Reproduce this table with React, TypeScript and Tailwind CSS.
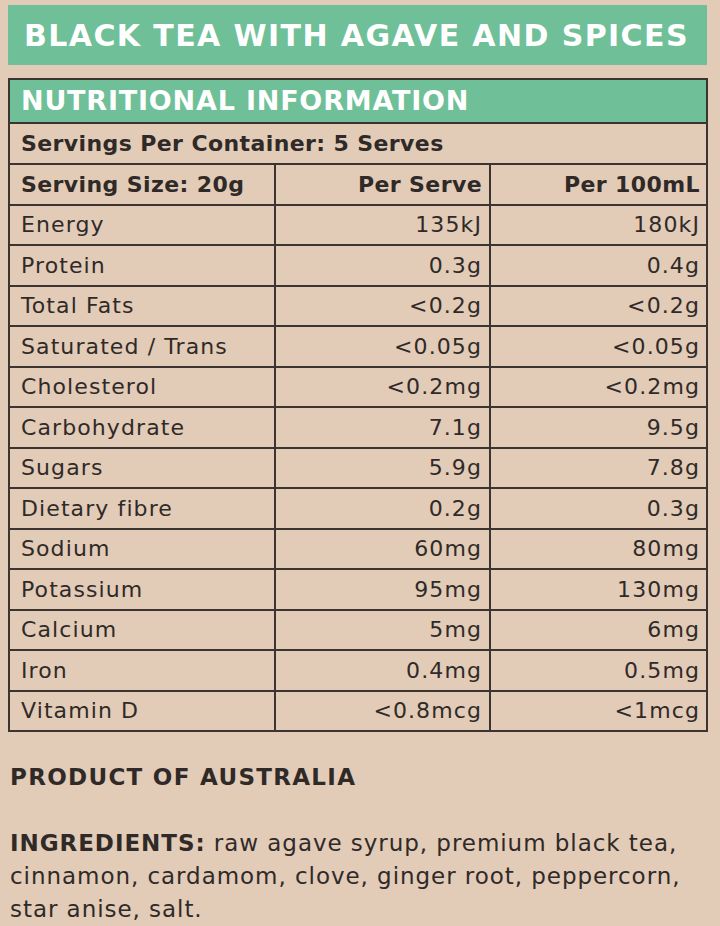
const rows = [
  ["Energy", "135kJ", "180kJ"],
  ["Protein", "0.3g", "0.4g"],
  ["Total Fats", "<0.2g", "<0.2g"],
  ["Saturated / Trans", "<0.05g", "<0.05g"],
  ["Cholesterol", "<0.2mg", "<0.2mg"],
  ["Carbohydrate", "7.1g", "9.5g"],
  ["Sugars", "5.9g", "7.8g"],
  ["Dietary fibre", "0.2g", "0.3g"],
  ["Sodium", "60mg", "80mg"],
  ["Potassium", "95mg", "130mg"],
  ["Calcium", "5mg", "6mg"],
  ["Iron", "0.4mg", "0.5mg"],
  ["Vitamin D", "<0.8mcg", "<1mcg"],
];

function Row({ a, b, c, bold }: { a: string; b: string; c: string; bold?: boolean }) {
  return (
    <div className={`grid grid-cols-[266px_215px_1fr] h-[40.5px] border-t-2 border-[#3b3431] ${bold ? "font-bold tracking-[0.4px]" : "tracking-[1.1px]"}`}>
      <div className="flex items-center pl-[11px] border-r-2 border-[#3b3431]">{a}</div>
      <div className="flex items-center justify-end pr-[7px] border-r-2 border-[#3b3431]">{b}</div>
      <div className="flex items-center justify-end pr-[6px]">{c}</div>
    </div>
  );
}

export default function App() {
  return (
    <div className="w-[720px] h-[926px] overflow-hidden bg-[#e2cbb7] text-[#2f2a28] px-[8px] pt-[5px]" style={{ fontFamily: '"DejaVu Sans", sans-serif' }}>
      <div className="h-[60px] w-[699px] bg-[#6fbf98] flex items-center pl-[16px] text-white font-bold text-[30px] tracking-[1.4px]">
        BLACK TEA WITH AGAVE AND SPICES
      </div>

      <div className="mt-[13px] w-[700px] border-2 border-[#3b3431] text-[22px]">
        <div className="h-[42px] bg-[#6fbf98] flex items-center pl-[11px] text-white font-semibold text-[27px] tracking-[0.8px]">
          NUTRITIONAL INFORMATION
        </div>
        <div className="h-[41px] border-t-2 border-[#3b3431] flex items-center pl-[11px] font-bold tracking-[0.4px]">
          Servings Per Container: 5 Serves
        </div>
        <Row a="Serving Size: 20g" b="Per Serve" c="Per 100mL" bold />
        {rows.map((r) => (
          <Row key={r[0]} a={r[0]} b={r[1]} c={r[2]} />
        ))}
      </div>

      <div className="mt-[28px] pl-[2px] font-bold text-[23px] tracking-[1.3px]">PRODUCT OF AUSTRALIA</div>

      <p className="mt-[32px] pl-[2px] text-[23px] leading-[33px] tracking-[0.95px]">
        <span className="font-bold">INGREDIENTS:</span> raw agave syrup, premium black tea, cinnamon, cardamom, clove, ginger root, peppercorn, star anise, salt.
      </p>
    </div>
  );
}
